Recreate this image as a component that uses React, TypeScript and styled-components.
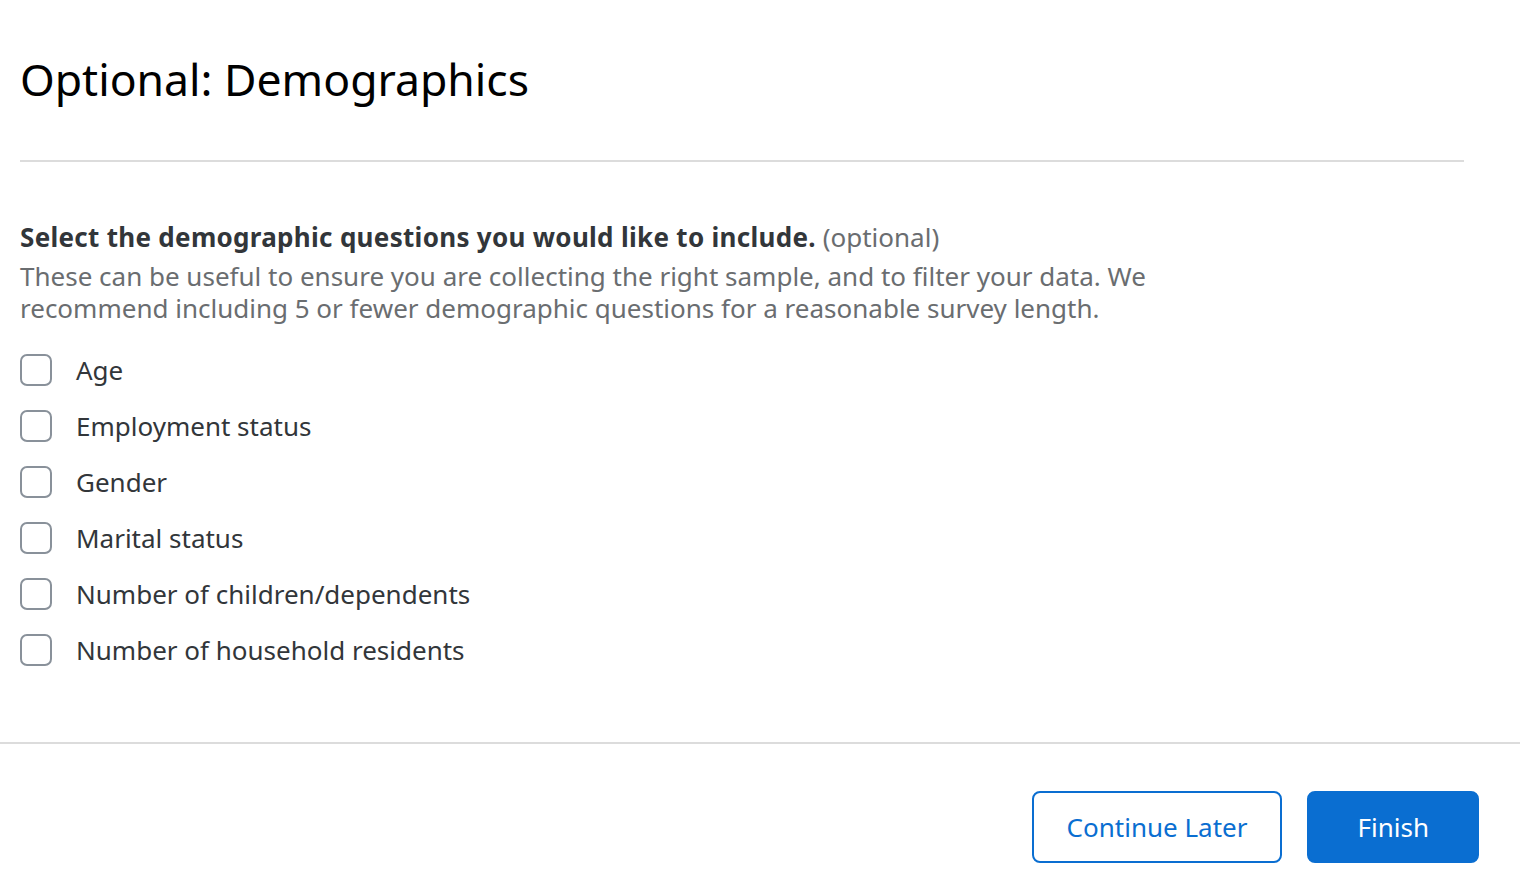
import styled, { createGlobalStyle } from 'styled-components';

const GlobalStyle = createGlobalStyle`
  body {
    margin: 0;
    background: #fff;
    font-family: 'Noto Sans', 'Open Sans', Arial, sans-serif;
  }
`;

const Page = styled.div`
  width: 1520px;
  height: 880px;
  display: flex;
  flex-direction: column;
  overflow: hidden;
`;

const Body = styled.main`
  padding: 0 56px 0 20px;
  flex: 1;
`;

const Title = styled.h1`
  margin: 0;
  padding-top: 50px;
  height: 162px;
  box-sizing: border-box;
  font-size: 44.5px;
  font-weight: 400;
  color: #000;
  line-height: 58px;
  border-bottom: 2px solid #dcdcdc;
`;

const Question = styled.div`
  padding-top: 59px;
`;

const Prompt = styled.div`
  font-size: 26px;
  line-height: 32px;
  color: #32363a;

  & strong {
    font-weight: 700;
    letter-spacing: 0.3px;
  }

  & span {
    color: #6a6d70;
  }
`;

const Hint = styled.p`
  margin: 7px 0 0;
  max-width: 1170px;
  font-size: 26px;
  line-height: 32px;
  color: #6a6d70;
`;

const Options = styled.ul`
  list-style: none;
  margin: 18px 0 0;
  padding: 0;
  display: flex;
  flex-direction: column;
`;

const Option = styled.li`
  display: flex;
  align-items: center;
  gap: 24px;
  height: 56px;
  font-size: 26px;
  color: #32363a;
`;

const Box = styled.span`
  width: 32px;
  height: 32px;
  box-sizing: border-box;
  border: 2px solid #89919a;
  border-radius: 7px;
  background: #fff;
`;

const Footer = styled.footer`
  border-top: 2px solid #dcdcdc;
  display: flex;
  justify-content: flex-end;
  gap: 25px;
  padding: 47px 41px 17px 0;
`;

const Button = styled.button<{ $primary?: boolean }>`
  height: 72px;
  padding: 0 ${p => (p.$primary ? '48px' : '33px')};
  border-radius: 8px;
  font-family: inherit;
  font-size: 26px;
  border: 2px solid #0a6ed1;
  background: ${p => (p.$primary ? '#0a6ed1' : '#fff')};
  color: ${p => (p.$primary ? '#fff' : '#0a6ed1')};
  cursor: pointer;
`;

const options = [
  'Age',
  'Employment status',
  'Gender',
  'Marital status',
  'Number of children/dependents',
  'Number of household residents',
];

export default function App() {
  return (
    <Page>
      <GlobalStyle />
      <Body>
        <Title>Optional: Demographics</Title>
        <Question>
          <Prompt>
            <strong>Select the demographic questions you would like to include.</strong>{' '}
            <span>(optional)</span>
          </Prompt>
          <Hint>
            These can be useful to ensure you are collecting the right sample, and to filter your
            data. We recommend including 5 or fewer demographic questions for a reasonable survey
            length.
          </Hint>
          <Options>
            {options.map(o => (
              <Option key={o}>
                <Box />
                {o}
              </Option>
            ))}
          </Options>
        </Question>
      </Body>
      <Footer>
        <Button>Continue Later</Button>
        <Button $primary>Finish</Button>
      </Footer>
    </Page>
  );
}
